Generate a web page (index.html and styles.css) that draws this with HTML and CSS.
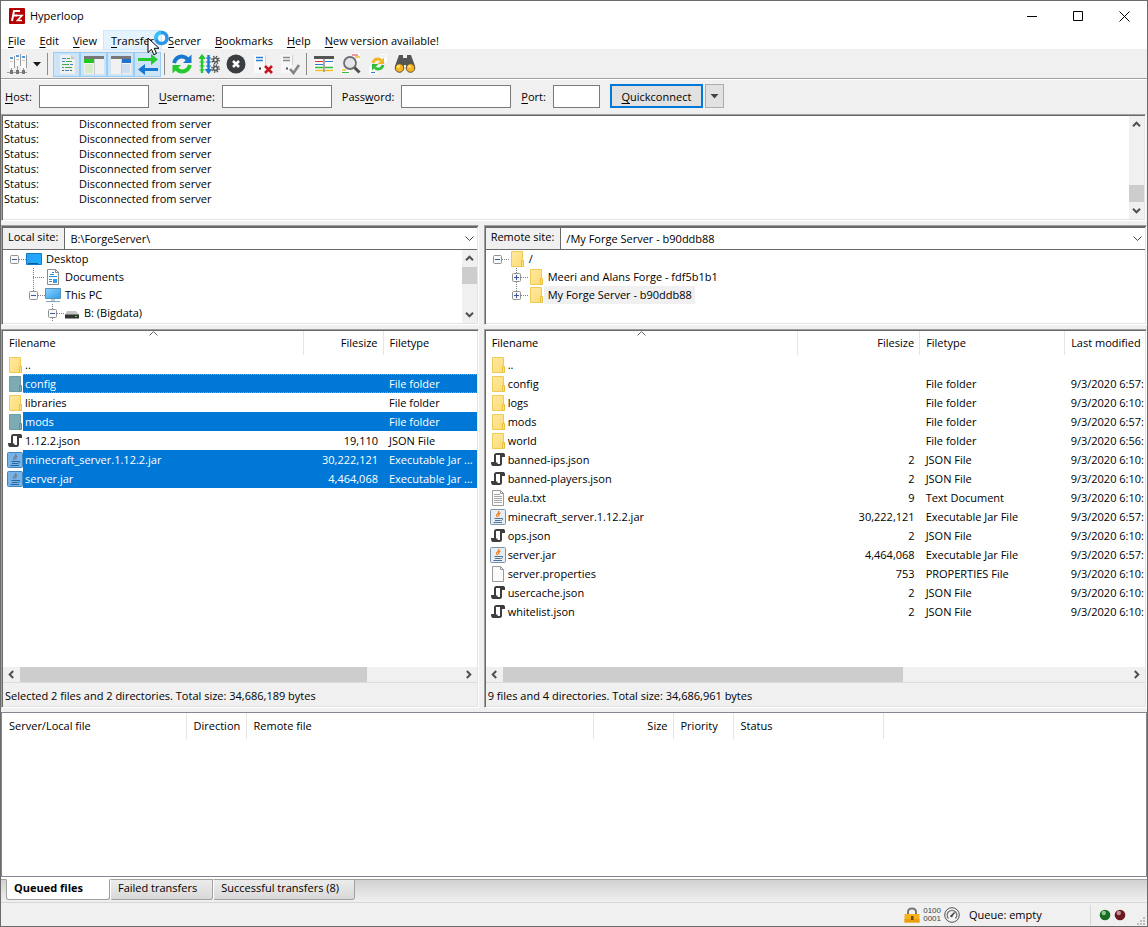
FILE: index.html
```html
<!DOCTYPE html>
<html lang="en">
<head>
  <meta charset="UTF-8">
  <title>Hyperloop</title>
  <meta name="viewport" content="width=device-width, initial-scale=1.0">
  <link rel="stylesheet" href="styles.css">
</head>
<body>

<svg class="sprite" aria-hidden="true">
  <linearGradient id="gFolder" x1="0" y1="0" x2="1" y2="1">
    <stop offset="0" stop-color="#ffe9a2"/><stop offset="1" stop-color="#fddc73"/>
  </linearGradient>
  <linearGradient id="gScreen" x1="0" y1="0" x2="1" y2="1">
    <stop offset="0" stop-color="#2f9df4"/><stop offset="1" stop-color="#19b1ff"/>
  </linearGradient>
  <linearGradient id="gPc" x1="0" y1="0" x2="1" y2="1">
    <stop offset="0" stop-color="#8fd3fb"/><stop offset="1" stop-color="#2a9df0"/>
  </linearGradient>
  <symbol id="folder" viewBox="0 0 16 16">
    <path d="M2.500 .5h11v15h-11z" fill="url(#gFolder)" stroke="#efcb55"/>
    <path d="M12.500 9.500h2v6h-2z" fill="#ffe28a" stroke="#e9bf3f"/>
  </symbol>
  <symbol id="folder-sel" viewBox="0 0 16 16">
    <path d="M2.500 .5h11v15h-11z" fill="#7dabb5" stroke="#6d9fa0"/>
    <path d="M12.500 9.500h2v6h-2z" fill="#80afb5" stroke="#5f9391"/>
  </symbol>
  <symbol id="json" viewBox="0 0 16 16">
    <path d="M5 11V3.500Q5 2 6.500 2H13M11 2.500V11.500Q11 13 9.500 13H3" fill="none" stroke="#3d3d3d" stroke-width="2"/>
    <path d="M12 1h2q1.500 1 1 4h-3zM1 10h6.500v1.500l1.500 2.500H3q-2 0-2-4z" fill="#3d3d3d"/>
    <path d="M6 3h4v7.500H6z" fill="#fff"/>
  </symbol>
  <symbol id="txt" viewBox="0 0 16 16">
    <path d="M2.500 .5h8l3 3v12h-11z" fill="#fbfbfb" stroke="#9a9a9a"/>
    <path d="M10.500 .5v3h3" fill="none" stroke="#9a9a9a"/>
    <path d="M4 4.500h6M4 6.500h8M4 8.500h8M4 10.500h8M4 12.500h8" stroke="#a8a8a8"/>
  </symbol>
  <symbol id="blank" viewBox="0 0 16 16">
    <path d="M2.500 .5h8l3 3v12h-11z" fill="#fbfbfb" stroke="#9a9a9a"/>
    <path d="M10.500 .5v3h3" fill="none" stroke="#9a9a9a"/>
  </symbol>
  <symbol id="jar" viewBox="0 0 16 16">
    <rect x=".5" y=".5" width="15" height="15" rx="1" fill="#e6edf4" stroke="#7d93a8"/>
    <path d="M8.500 2q1 1.500-1 3T7.500 8M10.500 4Q8 5 9 7.500" fill="none" stroke="#e8832a" stroke-width="1.300"/>
    <path d="M4.500 9.500h6.500M5 11.500h5.500M3.500 13.500h8.500M11 9.500q2.500-.5 1.500 1t-1.800 1" fill="none" stroke="#4c7396"/>
  </symbol>
  <symbol id="jar-sel" viewBox="0 0 16 16">
    <rect x=".5" y=".5" width="15" height="15" rx="1" fill="#76b3e6" stroke="#3f86c2"/>
    <path d="M8.500 2q1 1.500-1 3T7.500 8M10.500 4Q8 5 9 7.500" fill="none" stroke="#777f86" stroke-width="1.300"/>
    <path d="M4.500 9.500h6.500M5 11.500h5.500M3.500 13.500h8.500M11 9.500q2.500-.5 1.500 1t-1.800 1" fill="none" stroke="#2867a0"/>
  </symbol>
  <symbol id="minus" viewBox="0 0 9 9">
    <rect x=".5" y=".5" width="8" height="8" rx="1" fill="#f8f8f8" stroke="#919191"/>
    <path d="M2 4.500h5" stroke="#3a56a5"/>
  </symbol>
  <symbol id="plus" viewBox="0 0 9 9">
    <rect x=".5" y=".5" width="8" height="8" rx="1" fill="#f8f8f8" stroke="#919191"/>
    <path d="M2 4.500h5M4.500 2v5" stroke="#3a56a5"/>
  </symbol>
  <symbol id="up" viewBox="0 0 9 9"><path d="M1 6.200 4.500 2.700 8 6.200" fill="none" stroke="#505050" stroke-width="2"/></symbol>
  <symbol id="down" viewBox="0 0 9 9"><path d="M1 2.800 4.500 6.300 8 2.800" fill="none" stroke="#505050" stroke-width="2"/></symbol>
  <symbol id="left" viewBox="0 0 9 9"><path d="M6.200 1 2.700 4.500 6.200 8" fill="none" stroke="#505050" stroke-width="2"/></symbol>
  <symbol id="right" viewBox="0 0 9 9"><path d="M2.800 1 6.300 4.500 2.800 8" fill="none" stroke="#505050" stroke-width="2"/></symbol>
  <symbol id="chevron" viewBox="0 0 9 9"><path d="M.5 2.500 4.500 6.500 8.500 2.500" fill="none" stroke="#444"/></symbol>
  <symbol id="sort" viewBox="0 0 9 5"><path d="M.5 4.500 4.500 .5 8.500 4.500" fill="none" stroke="#666"/></symbol>
</svg>

<div class="window">

  <header class="titlebar">
    <svg class="app-icon" viewBox="0 0 16 16">
      <rect width="16" height="16" rx="1" fill="#b30000"/>
      <path d="M3 13 5 3h6M4.200 7.500h4" fill="none" stroke="#fff" stroke-width="2"/>
      <path d="M7.500 7.500h5.500L8.500 12.500H13" fill="none" stroke="#fff" stroke-width="1.600"/>
    </svg>
    <h1>Hyperloop</h1>
    <div class="caption-buttons">
      <button aria-label="Minimize"><svg viewBox="0 0 11 11"><path d="M0 5.500h10" stroke="#000"/></svg></button>
      <button aria-label="Maximize"><svg viewBox="0 0 11 11"><path d="M.5 .5h9v9h-9z" fill="none" stroke="#000"/></svg></button>
      <button aria-label="Close"><svg viewBox="0 0 11 11"><path d="M.5 .5l10 10M10.500 .5l-10 10" stroke="#000"/></svg></button>
    </div>
  </header>

  <nav class="menubar">
    <button><u>F</u>ile</button>
    <button><u>E</u>dit</button>
    <button><u>V</u>iew</button>
    <button class="hover"><u>T</u>ransfer</button>
    <button><u>S</u>erver</button>
    <button><u>B</u>ookmarks</button>
    <button><u>H</u>elp</button>
    <button><u>N</u>ew version available!</button>
    <svg class="pointer" viewBox="0 0 24 26">
      <circle cx="14.500" cy="8" r="5.500" fill="none" stroke="#2f95e8" stroke-width="3.600"/>
      <path d="M9.200 9.500A5.500 5.500 0 0 1 14 2.500" fill="none" stroke="#35c3f5" stroke-width="3.600"/>
      <path d="M1 8v14.500l3.500-3.200 2.300 5.400 2.700-1.200-2.300-5.200H12z" fill="#fff" stroke="#000"/>
    </svg>
  </nav>

  <div class="toolbar">
    <button aria-label="Site Manager">
      <svg viewBox="0 0 22 22">
        <path d="M3 3h5v12H3zM9 1h5v12H9zM15 2h5v13h-5z" fill="#fafafa"/>
        <path d="M8.500 3v12M14.500 1v12M20.500 2v13" stroke="#9a9a9a"/>
        <path d="M4 4h3v2H4zM10 2h3v2h-3zM16 3h3v2h-3z" fill="#4f9be0"/>
        <path d="M4 8.500h3M10 6.500h3M16 7.500h3" stroke="#c4c4c4"/>
        <path d="M1 19.500h20M5.500 15v4M11.500 13v6M17.500 15v4" stroke="#a0a0a0"/>
        <path d="M4 17h3v4H4zM10 17h3v4h-3zM16 17h3v4h-3z" fill="#777"/>
      </svg>
    </button>
    <button class="drop" aria-label="Open site list"><svg viewBox="0 0 8 5"><path d="M0 0h8L4 4.500z" fill="#1a1a1a"/></svg></button>
    <span class="sep"></span>
    <div class="toggles">
      <button class="on" aria-label="Toggle message log">
        <svg viewBox="0 0 22 22">
          <path d="M4 2h11l4 4v15H4z" fill="#f0f0f0"/><path d="M15 2v4h4z" fill="#c4c4c4"/>
          <path d="M6 5.500h4M6 8.500h3M6 14.500h2M9 17.500h4M14 11.500h3" stroke="#3f87cf"/>
          <path d="M11 5.500h3M10 8.500h6M6 11.500h6M9 14.500h7" stroke="#35b44a"/>
          <path d="M12 11.500h1M6 17.500h2M14 17.500h2" stroke="#666"/>
        </svg>
      </button>
      <button class="on" aria-label="Toggle local tree">
        <svg viewBox="0 0 22 22">
          <path d="M1 4h20v17H1z" fill="#f1f1f1"/><path d="M1 3h20v3H1z" fill="#777"/>
          <path d="M1 6h10v4H1z" fill="#1fc81f"/><path d="M2 11h8v9H2z" fill="#d6ecc8"/>
          <path d="M11.500 6v15" stroke="#ccc"/>
        </svg>
      </button>
      <button class="on" aria-label="Toggle remote tree">
        <svg viewBox="0 0 22 22">
          <path d="M1 4h20v17H1z" fill="#f1f1f1"/><path d="M1 3h20v3H1z" fill="#777"/>
          <path d="M12 6h9v4h-9z" fill="#1c72cd"/><path d="M12 11h8v9h-8z" fill="#cddff0"/>
          <path d="M11.500 6v15" stroke="#ccc"/>
        </svg>
      </button>
      <button class="on" aria-label="Toggle transfer queue">
        <svg viewBox="0 0 22 22">
          <path d="M1 5h13V1l7 5.500-7 5.500V8H1z" fill="#25c92d"/>
          <path d="M21 15H8v-4l-7 5.500L8 22v-4h13z" fill="#1b78d2"/>
        </svg>
      </button>
    </div>
    <span class="sep"></span>
    <button aria-label="Refresh">
      <svg viewBox="0 0 22 22">
        <path d="M3 10Q5 3.500 11 3.500q3 0 6 3" fill="none" stroke="#1b78d2" stroke-width="4"/><path d="M20.500 1.500V10H12z" fill="#1b78d2"/>
        <path d="M19 12q-2 6.500-8 6.500-3 0-6-3" fill="none" stroke="#25c92d" stroke-width="4"/><path d="M1.500 20.500V12H10z" fill="#25c92d"/>
      </svg>
    </button>
    <button aria-label="Process queue">
      <svg viewBox="0 0 22 22">
        <path d="M4 20V4" stroke="#25c92d" stroke-width="2.400"/><path d="M1 5.500 4 1.500l3 4zM1.500 9h5M1.500 13h5M1.500 17h5" fill="#25c92d" stroke="#25c92d"/>
        <path d="M10.500 2v16" stroke="#1b78d2" stroke-width="2.400"/><path d="M7.500 16.500l3 4 3-4zM8 5h5M8 9h5M8 13h5" fill="#1b78d2" stroke="#1b78d2"/>
        <circle cx="17.500" cy="7" r="2" fill="none" stroke="#555" stroke-width="1.600"/><circle cx="17.500" cy="7" r="3.600" fill="none" stroke="#555" stroke-width="1.500" stroke-dasharray="1.400 1.430"/>
        <circle cx="17.500" cy="15.500" r="2" fill="none" stroke="#555" stroke-width="1.600"/><circle cx="17.500" cy="15.500" r="3.600" fill="none" stroke="#555" stroke-width="1.500" stroke-dasharray="1.400 1.430"/>
      </svg>
    </button>
    <button aria-label="Cancel">
      <svg viewBox="0 0 22 22">
        <circle cx="11" cy="11" r="9.500" fill="#3b3e41"/>
        <path d="M8 8l6 6M14 8l-6 6" stroke="#fff" stroke-width="2.600"/>
      </svg>
    </button>
    <button aria-label="Disconnect">
      <svg viewBox="0 0 22 22">
        <path d="M2 2h11v18H2z" fill="#fafafa"/><path d="M13.500 2v10" stroke="#d0d0d0"/>
        <path d="M4 4.500h7M4 7.500h7" stroke="#2b7fd3" stroke-width="1.600"/><path d="M7 15.500h2" stroke="#333" stroke-width="2"/>
        <path d="M13 13l7 7M20 13l-7 7" stroke="#c3171e" stroke-width="2.600"/>
      </svg>
    </button>
    <button aria-label="Reconnect">
      <svg viewBox="0 0 22 22">
        <path d="M2 2h11v18H2z" fill="#f7f7f7"/><path d="M13.500 2v10" stroke="#d0d0d0"/>
        <path d="M4 4.500h7M4 7.500h7" stroke="#8a8a8a" stroke-width="1.600"/><path d="M7 15.500h2" stroke="#555" stroke-width="2"/>
        <path d="M11 16l3.500 4L20 12" fill="none" stroke="#858585" stroke-width="2.600"/>
      </svg>
    </button>
    <span class="sep"></span>
    <button aria-label="Filters">
      <svg viewBox="0 0 22 22">
        <path d="M1 4h20v15H1z" fill="#fafafa"/><path d="M1 3h20v3H1z" fill="#555"/>
        <path d="M2 8.500h8" stroke="#d33"/><path d="M2 11.500h8M12 8.500h8" stroke="#2b7fd3"/>
        <path d="M2 14.500h8M12 14.500h8" stroke="#30bd3a" stroke-width="1.400"/><path d="M2 17.500h8M12 17.500h8" stroke="#eebf22" stroke-width="1.400"/>
        <path d="M11 3v16" stroke="#555"/>
      </svg>
    </button>
    <button aria-label="Directory comparison">
      <svg viewBox="0 0 22 22">
        <path d="M12 0h8v8h-8zM1 15h9v6H1z" fill="#fdfdfd"/>
        <path d="M12 2h6" stroke="#d33"/><path d="M15 4h5M2 17h4" stroke="#eebf22" stroke-width="1.500"/><path d="M2 19.500h7" stroke="#30bd3a"/>
        <circle cx="10" cy="10" r="6" fill="#e3e7ec" stroke="#6f6f6f" stroke-width="1.800"/>
        <path d="M14.500 14.500l5 5" stroke="#4d4d4d" stroke-width="3"/>
      </svg>
    </button>
    <button aria-label="Synchronized browsing">
      <svg viewBox="0 0 22 22">
        <path d="M13 1h7v8h-7zM2 13h8v8H2z" fill="#fdfdfd"/><path d="M4 19.500h4" stroke="#2b7fd3"/><path d="M14 3h5" stroke="#ddd"/>
        <path d="M6 10q1-4 5-4 2 0 3 1.500" fill="none" stroke="#f0b51f" stroke-width="3"/><path d="M17 4.500V11h-6.500z" fill="#f0b51f"/>
        <path d="M16 12q-1 4-5 4-2 0-3-1.500" fill="none" stroke="#30bd3a" stroke-width="3"/><path d="M5 17.500V11h6.500z" fill="#30bd3a"/>
      </svg>
    </button>
    <button aria-label="Find files">
      <svg viewBox="0 0 22 22">
        <path d="M5 2h4v3h4V2h4l4 11v3h-8l-1-4h-2l-1 4H1v-3z" fill="#555"/>
        <circle cx="5.500" cy="15" r="4.300" fill="#f7b621" stroke="#5e5335"/><circle cx="16.500" cy="15" r="4.300" fill="#f7b621" stroke="#5e5335"/>
        <circle cx="4.500" cy="13.500" r="1.500" fill="#ffe27c"/><circle cx="15.500" cy="13.500" r="1.500" fill="#ffe27c"/>
      </svg>
    </button>
  </div>

  <form class="quickconnect">
    <label for="host"><u>H</u>ost:</label>
    <input type="text" id="host">
    <label for="username"><u>U</u>sername:</label>
    <input type="text" id="username">
    <label for="password">Pass<u>w</u>ord:</label>
    <input type="password" id="password">
    <label for="port"><u>P</u>ort:</label>
    <input type="text" id="port" class="short">
    <button type="button" class="connect"><u>Q</u>uickconnect</button>
    <button type="button" class="history" aria-label="Connection history"><svg viewBox="0 0 8 5"><path d="M0 0h8L4 4.500z" fill="#444"/></svg></button>
  </form>

  <section class="log pane">
    <table>
      <tr><th>Status:</th><td>Disconnected from server</td></tr>
      <tr><th>Status:</th><td>Disconnected from server</td></tr>
      <tr><th>Status:</th><td>Disconnected from server</td></tr>
      <tr><th>Status:</th><td>Disconnected from server</td></tr>
      <tr><th>Status:</th><td>Disconnected from server</td></tr>
      <tr><th>Status:</th><td>Disconnected from server</td></tr>
    </table>
    <div class="vscroll at-end">
      <svg><use href="#up"/></svg><span class="thumb"></span><svg><use href="#down"/></svg>
    </div>
  </section>

  <main class="sites">
    <section class="site">
      <div class="pane browser">
        <div class="address">
          <label for="local">Local site:</label>
          <select id="local"><option>B:\ForgeServer\</option></select>
          <svg><use href="#chevron"/></svg>
        </div>
        <div class="tree-wrap">
          <ul class="tree">
            <li><svg class="box"><use href="#minus"/></svg><i></i>
              <svg class="ico" viewBox="0 0 16 16"><path d="M.5 2.500h15v11H.5z" fill="url(#gScreen)" stroke="#1279c7"/><path d="M2 12.500h10" stroke="#0b5b99"/></svg>
              <span>Desktop</span></li>
            <li class="l1 leaf"><i></i>
              <svg class="ico" viewBox="0 0 16 16"><path d="M2.500 .5h8l3 3v12h-11z" fill="#fff" stroke="#8c8c8c"/><path d="M10.500 .5v3h3" fill="none" stroke="#8c8c8c"/><path d="M7 3.500h2M5 5.500h4M4 7.500h8M4 10.500h3M4 12.500h3" stroke="#2d8fd8"/><path d="M8 10h4v4H8z" fill="#3a9de0"/></svg>
              <span>Documents</span></li>
            <li class="l1 end"><svg class="box"><use href="#minus"/></svg><i></i>
              <svg class="ico" viewBox="0 0 16 16"><path d="M.5 1.500h15v10H.5z" fill="url(#gPc)" stroke="#5b93b5"/><path d="M6 12h4v2H6z" fill="#b9cfdd"/><path d="M1 14.500h14" stroke="#7fa6bf"/></svg>
              <span>This PC</span></li>
            <li class="l2"><svg class="box"><use href="#minus"/></svg><i></i>
              <svg class="ico" viewBox="0 0 16 16"><path d="M3 6h9l3 4H1z" fill="#c4c4c4"/><path d="M1 9.500h14v4H1z" fill="#333"/><path d="M11 11h2v1h-2z" fill="#3ee03e"/></svg>
              <span>B: (Bigdata)</span></li>
          </ul>
          <div class="vscroll">
            <svg><use href="#up"/></svg><span class="thumb"></span><svg><use href="#down"/></svg>
          </div>
        </div>
      </div>

      <div class="pane files">
        <div class="list">
          <table class="local">
            <colgroup><col class="c-name"><col class="c-size"><col></colgroup>
            <thead>
              <tr><th>Filename<svg class="sort"><use href="#sort"/></svg></th><th class="num">Filesize</th><th>Filetype</th></tr>
            </thead>
            <tbody>
              <tr><td><div><svg><use href="#folder"/></svg><span>..</span></div></td><td></td><td></td></tr>
              <tr class="sel focus"><td><div><svg><use href="#folder-sel"/></svg><span>config</span></div></td><td></td><td>File folder</td></tr>
              <tr><td><div><svg><use href="#folder"/></svg><span>libraries</span></div></td><td></td><td>File folder</td></tr>
              <tr class="sel"><td><div><svg><use href="#folder-sel"/></svg><span>mods</span></div></td><td></td><td>File folder</td></tr>
              <tr><td><div><svg><use href="#json"/></svg><span>1.12.2.json</span></div></td><td class="num">19,110</td><td>JSON File</td></tr>
              <tr class="sel"><td><div><svg><use href="#jar-sel"/></svg><span>minecraft_server.1.12.2.jar</span></div></td><td class="num">30,222,121</td><td>Executable Jar ...</td></tr>
              <tr class="sel"><td><div><svg><use href="#jar-sel"/></svg><span>server.jar</span></div></td><td class="num">4,464,068</td><td>Executable Jar ...</td></tr>
            </tbody>
          </table>
        </div>
        <div class="hscroll">
          <svg><use href="#left"/></svg><div class="track"><span style="width: 79%"></span></div><svg><use href="#right"/></svg>
        </div>
        <p class="summary">Selected 2 files and 2 directories. Total size: 34,686,189 bytes</p>
      </div>
    </section>

    <section class="site">
      <div class="pane browser">
        <div class="address">
          <label for="remote">Remote site:</label>
          <select id="remote"><option>/My Forge Server - b90ddb88</option></select>
          <svg><use href="#chevron"/></svg>
        </div>
        <div class="tree-wrap">
          <ul class="tree">
            <li><svg class="box"><use href="#minus"/></svg><i></i><svg class="ico"><use href="#folder"/></svg><span>/</span></li>
            <li class="l1"><svg class="box"><use href="#plus"/></svg><i></i><svg class="ico"><use href="#folder"/></svg><span>Meeri and Alans Forge - fdf5b1b1</span></li>
            <li class="l1 end"><svg class="box"><use href="#plus"/></svg><i></i><svg class="ico"><use href="#folder"/></svg><span class="current">My Forge Server - b90ddb88</span></li>
          </ul>
        </div>
      </div>

      <div class="pane files">
        <div class="list">
          <table class="remote">
            <colgroup><col class="c-name"><col class="c-size"><col class="c-type"><col></colgroup>
            <thead>
              <tr><th>Filename<svg class="sort"><use href="#sort"/></svg></th><th class="num">Filesize</th><th>Filetype</th><th>Last modified</th></tr>
            </thead>
            <tbody>
              <tr><td><div><svg><use href="#folder"/></svg><span>..</span></div></td><td></td><td></td><td></td></tr>
              <tr><td><div><svg><use href="#folder"/></svg><span>config</span></div></td><td></td><td>File folder</td><td>9/3/2020 6:57:</td></tr>
              <tr><td><div><svg><use href="#folder"/></svg><span>logs</span></div></td><td></td><td>File folder</td><td>9/3/2020 6:10:</td></tr>
              <tr><td><div><svg><use href="#folder"/></svg><span>mods</span></div></td><td></td><td>File folder</td><td>9/3/2020 6:57:</td></tr>
              <tr><td><div><svg><use href="#folder"/></svg><span>world</span></div></td><td></td><td>File folder</td><td>9/3/2020 6:56:</td></tr>
              <tr><td><div><svg><use href="#json"/></svg><span>banned-ips.json</span></div></td><td class="num">2</td><td>JSON File</td><td>9/3/2020 6:10:</td></tr>
              <tr><td><div><svg><use href="#json"/></svg><span>banned-players.json</span></div></td><td class="num">2</td><td>JSON File</td><td>9/3/2020 6:10:</td></tr>
              <tr><td><div><svg><use href="#txt"/></svg><span>eula.txt</span></div></td><td class="num">9</td><td>Text Document</td><td>9/3/2020 6:10:</td></tr>
              <tr><td><div><svg><use href="#jar"/></svg><span>minecraft_server.1.12.2.jar</span></div></td><td class="num">30,222,121</td><td>Executable Jar File</td><td>9/3/2020 6:57:</td></tr>
              <tr><td><div><svg><use href="#json"/></svg><span>ops.json</span></div></td><td class="num">2</td><td>JSON File</td><td>9/3/2020 6:10:</td></tr>
              <tr><td><div><svg><use href="#jar"/></svg><span>server.jar</span></div></td><td class="num">4,464,068</td><td>Executable Jar File</td><td>9/3/2020 6:57:</td></tr>
              <tr><td><div><svg><use href="#blank"/></svg><span>server.properties</span></div></td><td class="num">753</td><td>PROPERTIES File</td><td>9/3/2020 6:10:</td></tr>
              <tr><td><div><svg><use href="#json"/></svg><span>usercache.json</span></div></td><td class="num">2</td><td>JSON File</td><td>9/3/2020 6:10:</td></tr>
              <tr><td><div><svg><use href="#json"/></svg><span>whitelist.json</span></div></td><td class="num">2</td><td>JSON File</td><td>9/3/2020 6:10:</td></tr>
            </tbody>
          </table>
        </div>
        <div class="hscroll">
          <svg><use href="#left"/></svg><div class="track"><span style="width: 64%"></span></div><svg><use href="#right"/></svg>
        </div>
        <p class="summary">9 files and 4 directories. Total size: 34,686,961 bytes</p>
      </div>
    </section>
  </main>

  <section class="queue">
    <table>
      <colgroup><col class="q-server"><col class="q-dir"><col class="q-remote"><col class="q-size"><col class="q-prio"><col class="q-status"><col></colgroup>
      <thead>
        <tr><th>Server/Local file</th><th>Direction</th><th>Remote file</th><th class="num">Size</th><th>Priority</th><th>Status</th><th></th></tr>
      </thead>
    </table>
  </section>

  <div class="tabs" role="tablist">
    <button role="tab" class="active" aria-selected="true">Queued files</button>
    <button role="tab">Failed transfers</button>
    <button role="tab">Successful transfers (8)</button>
  </div>

  <footer class="statusbar">
    <svg viewBox="0 0 16 16">
      <path d="M4 8V5q0-3.500 4-3.500T12 5v3" fill="none" stroke="#777" stroke-width="2"/>
      <path d="M.5 7h15v8.500H.5z" fill="#f5b21b"/><path d="M.5 12h15v3.500H.5z" fill="#e8a00f"/>
      <path d="M7 9h2.500v4H7z" fill="#6b4a0a"/>
    </svg>
    <span class="bits">0100<br>0001</span>
    <svg viewBox="0 0 16 16">
      <circle cx="8" cy="8" r="7.300" fill="#f4f4f4" stroke="#555"/>
      <path d="M4.500 11.500A4.800 4.800 0 1 1 11.500 11.500" fill="none" stroke="#777" stroke-width="1.500"/>
      <path d="M7 9.500 10.500 5.500" stroke="#444" stroke-width="1.500"/><circle cx="7.500" cy="9" r="1.200" fill="#444"/>
    </svg>
    <span class="queue-state">Queue: empty</span>
    <div class="leds">
      <svg viewBox="0 0 12 12"><circle cx="6" cy="6" r="5.300" fill="#1b6b22"/><circle cx="4.800" cy="4" r="2.200" fill="#8fc493"/></svg>
      <svg viewBox="0 0 12 12"><circle cx="6" cy="6" r="5.300" fill="#6b1a20"/><circle cx="4.800" cy="4" r="2.200" fill="#c48f93"/></svg>
      <svg class="grip" viewBox="0 0 8 8"><path d="M6 0h2v2H6zM3 3h2v2H3zM6 3h2v2H6zM0 6h2v2H0zM3 6h2v2H3zM6 6h2v2H6z" fill="#bdbdbd"/></svg>
    </div>
  </footer>

</div>

</body>
</html>
```
FILE: styles.css
```css
* {
  box-sizing: border-box;
}

body {
  margin: 0;
  font: 11px/15px "Open Sans", "Noto Sans", sans-serif;
  color: #000;
  background: #f0f0f0;
}

button, input, select {
  font: inherit;
  color: inherit;
  border: 0;
  padding: 0;
  margin: 0;
  background: none;
  border-radius: 0;
}

svg {
  display: block;
  flex: none;
}

table {
  border-collapse: collapse;
  border-spacing: 0;
}

th {
  font-weight: normal;
  text-align: left;
}

th, td {
  padding: 0;
}

u {
  text-underline-offset: 2px;
}

.sprite {
  position: absolute;
  width: 0;
  height: 0;
}

.window {
  display: flex;
  flex-direction: column;
  min-height: 100vh;
  border: 1px solid #6b6b6b;
}

/* title and menu */
.titlebar {
  display: flex;
  align-items: center;
  height: 30px;
  padding-left: 8px;
  background: #fff;
}

.titlebar h1 {
  margin: 0 auto 0 5px;
  padding-bottom: 1px;
  font-size: 11px;
  font-weight: normal;
}

.app-icon {
  width: 16px;
  height: 16px;
}

.caption-buttons {
  display: flex;
}

.caption-buttons button {
  display: grid;
  place-items: center;
  width: 46px;
  height: 30px;
}

.caption-buttons svg {
  width: 11px;
  height: 11px;
}

.menubar {
  position: relative;
  display: flex;
  height: 18px;
  background: #fff;
}

.menubar button {
  padding: 1px 7px 0;
  line-height: 17px;
}

.menubar .hover {
  background: #e5f3ff;
  box-shadow: 0 0 0 1px #cce8ff;
}

.pointer {
  position: absolute;
  left: 146px;
  top: -1px;
  width: 24px;
  height: 26px;
}

/* toolbar */
.toolbar {
  display: flex;
  align-items: center;
  height: 31px;
  padding-left: 2px;
  border-bottom: 1px solid #fff;
  box-shadow: inset 0 -1px #a0a0a0;
}

.toolbar button {
  display: grid;
  place-items: center;
  width: 27px;
  height: 25px;
}

.toolbar button svg {
  width: 22px;
  height: 22px;
}

.toolbar .drop {
  width: 14px;
}

.toolbar .drop svg {
  width: 8px;
  height: 5px;
}

.toolbar .sep {
  width: 1px;
  height: 22px;
  margin: 0 3px;
  background: #8d8d8d;
}

.toggles {
  display: flex;
  margin-left: 2px;
}

.toolbar .on {
  background: #cce4f7;
  border: 1px solid #99ccf5;
}

/* quick connect */
.quickconnect {
  display: flex;
  align-items: center;
  height: 34px;
  padding: 0 0 2px 4px;
}

.quickconnect label {
  margin-right: 7px;
}

.quickconnect input {
  width: 110px;
  height: 23px;
  margin-right: 10px;
  padding: 0 4px;
  border: 1px solid #7a7a7a;
  background: #fff;
}

.quickconnect .short {
  width: 47px;
}

.connect {
  width: 93px;
  height: 24px;
  border: 2px solid #0078d7;
  background: #e1e1e1;
}

.history {
  display: grid;
  place-items: center;
  width: 19px;
  height: 24px;
  margin-left: 2px;
  border: 1px solid #adadad;
  background: #e1e1e1;
}

.history svg {
  width: 9px;
  height: 5px;
}

/* sunken frame shared by log, trees and lists */
.pane {
  padding: 1px;
  border: 1px solid #a0a0a0;
  border-right-color: #fff;
  border-bottom-color: #fff;
  box-shadow: inset 1px 1px #696969, inset -1px -1px #e3e3e3;
  background: #fff;
}

.log {
  display: flex;
  justify-content: space-between;
  min-height: 107px;
  margin-right: 1px;
}

.log table {
  align-self: flex-start;
}

.log th {
  width: 76px;
  padding-left: 1px;
}

/* scrollbars */
.vscroll {
  display: flex;
  flex-direction: column;
  align-items: center;
  width: 15px;
  background: #f0f0f0;
}

.vscroll svg {
  width: 9px;
  height: 9px;
  margin: 4px 0;
}

.vscroll .thumb {
  width: 15px;
  height: 17px;
  margin-bottom: auto;
  background: #cdcdcd;
}

.vscroll.at-end .thumb {
  margin: auto 0 0;
}

.hscroll {
  display: flex;
  align-items: center;
  height: 15px;
  background: #f0f0f0;
}

.hscroll svg {
  width: 9px;
  height: 9px;
  margin: 0 4px;
}

.track {
  flex: 1;
  height: 15px;
}

.track span {
  display: block;
  height: 100%;
  background: #cdcdcd;
}

/* local and remote sides */
.sites {
  flex: 1;
  display: grid;
  grid-template-columns: 18fr 25fr;
  gap: 5px;
  margin: 4px 0;
}

.site {
  display: flex;
  flex-direction: column;
  gap: 4px;
  min-width: 0;
}

.browser {
  min-height: 100px;
}

.address {
  display: flex;
  align-items: center;
  height: 23px;
  border-top: 1px solid #696969;
  border-bottom: 1px solid #696969;
}

.address label {
  align-self: stretch;
  padding: 2px 6px 0 5px;
  border-right: 1px solid #696969;
  background: #f0f0f0;
  line-height: 14px;
}

.address select {
  flex: 1;
  min-width: 0;
  padding: 0 0 1px 5px;
  appearance: none;
}

.address svg {
  width: 9px;
  height: 9px;
  margin-right: 3px;
}

.tree-wrap {
  display: flex;
  justify-content: space-between;
  height: 73px;
  overflow: hidden;
}

.tree {
  margin: 0;
  padding: 0 0 0 7px;
  list-style: none;
}

.tree li {
  display: flex;
  align-items: center;
  height: 18px;
}

.tree .l1 {
  padding-left: 19px;
  background: linear-gradient(#808080 50%, transparent 50%) 23px 0 / 1px 2px repeat-y;
}

.tree .l1.end {
  background: linear-gradient(transparent 50%, #fff 50%), linear-gradient(#808080 50%, transparent 50%) 23px 0 / 1px 2px repeat-y;
}

.tree .l2 {
  padding-left: 38px;
  background: linear-gradient(#808080 50%, transparent 50%) 42px 0 / 1px 2px repeat-y;
}

.tree .box {
  width: 9px;
  height: 9px;
}

.tree i {
  width: 7px;
  height: 1px;
  background: linear-gradient(90deg, #808080 50%, transparent 50%) 0 0 / 2px 1px repeat-x;
}

.tree .leaf i {
  width: 12px;
  margin-left: 4px;
}

.tree .ico {
  width: 16px;
  height: 16px;
}

.tree span {
  height: 18px;
  padding: 0 3px 0 4px;
  line-height: 17px;
}

.tree .current {
  background: #f0f0f0;
}

.files {
  flex: 1;
  display: flex;
  flex-direction: column;
}

.list {
  flex: 1;
  overflow: hidden;
}

.list table, .queue table {
  width: 100%;
  table-layout: fixed;
}

.list th, .queue th {
  position: relative;
  height: 24px;
  padding: 0 5px 2px 6px;
  border-right: 1px solid #e5e5e5;
  white-space: nowrap;
}

.list th:last-child, .queue th:last-child {
  border-right: 0;
}

.list th:last-child {
  padding-right: 0;
}

.list th.num, .list td.num, .queue th.num {
  text-align: right;
}

.sort {
  position: absolute;
  left: 50%;
  top: 0;
  width: 9px;
  height: 5px;
  margin-left: -4px;
}

.local .c-name {
  width: 300px;
}

.local .c-size {
  width: 80px;
}

.remote .c-name {
  width: 312px;
}

.remote .c-size {
  width: 122px;
}

.remote .c-type {
  width: 145px;
}

.list td {
  height: 19px;
  padding: 0 5px 0 6px;
  white-space: nowrap;
  overflow: hidden;
}

.list td:first-child {
  padding: 0 0 0 4px;
}

.list td:last-child {
  padding-right: 0;
}

.list td div {
  display: flex;
  align-items: center;
}

.list td svg {
  width: 16px;
  height: 16px;
}

.list td span {
  flex: 1;
  padding-left: 2px;
  line-height: 19px;
}

.sel {
  color: #fff;
}

.sel span, .sel td:not(:first-child) {
  background: #0078d7;
}

/* dotted focus line above and below the row */
.focus span, .focus td:not(:first-child) {
  background:
    linear-gradient(90deg, #ff8728 50%, transparent 50%) 0 0 / 2px 1px repeat-x,
    linear-gradient(90deg, #ff8728 50%, transparent 50%) 0 100% / 2px 1px repeat-x,
    #0078d7;
}

.summary {
  height: 24px;
  margin: 0;
  padding: 5px 2px 4px;
  border-top: 1px solid #dcdcdc;
  background: #f0f0f0;
}

/* queue */
.queue {
  min-height: 165px;
  border: 1px solid #828790;
  background: #fff;
}

.queue th {
  height: 26px;
  padding-left: 7px;
}

.q-server {
  width: 184px;
}

.q-dir, .q-prio {
  width: 60px;
}

.q-remote {
  width: 347px;
}

.q-size {
  width: 80px;
}

.q-status {
  width: 150px;
}

.tabs {
  display: flex;
  align-items: flex-start;
  height: 26px;
  padding-left: 5px;
  border-top: 2px solid #fff;
  border-bottom: 1px solid #d7d7d7;
  background: linear-gradient(#d0d0d0, #f0f0f0);
  box-shadow: inset 0 1px #a0a0a0;
}

.tabs button {
  height: 21px;
  padding: 0 15px 4px 7px;
  border: 1px solid #a0a0a0;
  border-left-color: #fff;
  border-radius: 0 0 3px 3px;
  background: linear-gradient(#ececec, #d9d9d9);
}

.tabs .active {
  padding-right: 26px;
  border-top-color: #fff;
  border-left-color: #a0a0a0;
  background: #fff;
  font-weight: bold;
}

.statusbar {
  display: flex;
  align-items: center;
  justify-content: flex-end;
  gap: 3px;
  height: 23px;
}

.statusbar svg {
  width: 16px;
  height: 16px;
}

.bits {
  font: 8px/8px "Liberation Sans", sans-serif;
  color: #444;
}

.queue-state {
  width: 124px;
  padding-left: 6px;
}

.leds {
  display: flex;
  align-items: center;
  gap: 3px;
  height: 20px;
  padding-left: 8px;
  border-left: 1px solid #d7d7d7;
}

.statusbar .leds svg {
  width: 12px;
  height: 12px;
}

.statusbar .leds .grip {
  align-self: flex-end;
  width: 8px;
  height: 8px;
  margin: 0 2px 0 8px;
}
```
